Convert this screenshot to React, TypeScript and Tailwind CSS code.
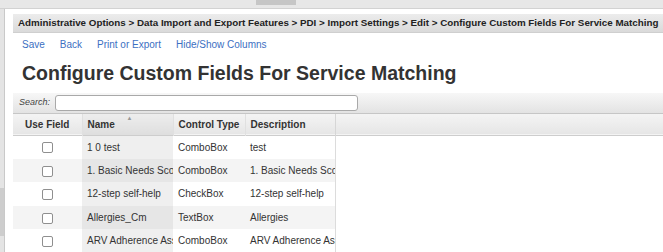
import React from 'react';

interface Field {
  name: string;
  control: string;
  description: string;
}

const fields: Field[] = [
  { name: '1 0 test', control: 'ComboBox', description: 'test' },
  { name: '1. Basic Needs Score', control: 'ComboBox', description: '1. Basic Needs Score' },
  { name: '12-step self-help', control: 'CheckBox', description: '12-step self-help' },
  { name: 'Allergies_Cm', control: 'TextBox', description: 'Allergies' },
  { name: 'ARV Adherence Assessment', control: 'ComboBox', description: 'ARV Adherence Assessment' },
];

const links = ['Save', 'Back', 'Print or Export', 'Hide/Show Columns'];

export default function App() {
  return (
    <div
      className="w-[663px] h-[252px] overflow-hidden bg-white flex flex-col text-[#333]"
      style={{ fontFamily: '"Liberation Sans", Arial, sans-serif' }}
    >
      {/* window top strip */}
      <div className="h-[9px] shrink-0 bg-[#e7e7e7] border-b border-[#d2d2d2] pl-[256px]">
        <div className="w-[40px] h-[5px] bg-[#c6c6c6]" />
      </div>

      <div className="flex flex-1 min-h-0">
        <div className="w-[5px] shrink-0 bg-[#e4e4e4] border-r border-[#c9c9c9] flex flex-col">
          <div className="flex-1" />
          <div className="h-[48px] mb-[16px] bg-[#cdcdcd]" />
        </div>

        <div className="flex-1 min-w-0 pl-[8px] pt-[5px]">
          {/* breadcrumb */}
          <div className="h-[19px] bg-gradient-to-b from-[#ececec] to-[#dadada] border-b border-[#cfcfcf] flex items-center pl-[5px] whitespace-nowrap overflow-hidden">
            <span className="text-[9.8px] font-bold text-[#222]">
              Administrative Options &gt; Data Import and Export Features &gt; PDI &gt; Import Settings &gt; Edit &gt; Configure Custom Fields For Service Matching
            </span>
          </div>

          {/* action links */}
          <div className="h-[22px] flex items-center gap-[15px] pl-[9px] text-[10px] text-[#3c6fc2]">
            {links.map((l) => (
              <span key={l}>{l}</span>
            ))}
          </div>

          {/* title */}
          <h1 className="h-[38px] flex items-center pl-[9px] text-[19.5px] font-bold text-[#333] whitespace-nowrap">
            Configure Custom Fields For Service Matching
          </h1>

          {/* search */}
          <div className="h-[21px] bg-gradient-to-b from-[#f7f7f7] to-[#e3e3e3] border-b border-[#c6c6c6] flex items-center pl-[6px] gap-[5px]">
            <span className="text-[9px] italic text-[#444]">Search:</span>
            <div className="w-[303px] h-[16px] bg-white border border-[#a9a9a9] rounded-[3px]" />
          </div>

          {/* table */}
          <table className="table-fixed border-collapse w-full text-[10px]">
            <colgroup>
              <col className="w-[69px]" />
              <col className="w-[91px]" />
              <col className="w-[72px]" />
              <col className="w-[90px]" />
              <col />
            </colgroup>
            <thead>
              <tr className="h-[21px] bg-gradient-to-b from-[#f4f4f4] to-[#e6e6e6] border-b border-[#cdcdcd]">
                <th className="font-bold text-center text-[#333] whitespace-nowrap">Use Field</th>
                <th className="relative font-bold text-left pl-[5px] text-[#333] bg-gradient-to-b from-[#ededed] to-[#dedede] border-l border-[#e0e0e0]">
                  Name
                  <span className="absolute left-[44px] top-[1px] text-[6px] leading-none text-[#999]">▲</span>
                </th>
                <th className="font-bold text-left pl-[5px] text-[#333] border-l border-[#e0e0e0] whitespace-nowrap">Control Type</th>
                <th className="font-bold text-left pl-[5px] text-[#333] border-l border-[#e0e0e0] whitespace-nowrap">Description</th>
                <th className="border-l border-[#d6d6d6]" />
              </tr>
            </thead>
            <tbody>
              {fields.map((f, i) => {
                const odd = i % 2 === 1;
                return (
                  <tr key={f.name} className={`h-[23.5px] ${odd ? 'bg-[#f4f4f4]' : 'bg-white'}`}>
                    <td className="text-center">
                      <span className="inline-block align-middle w-[11px] h-[11px] border border-[#8f8f8f] rounded-[2px] bg-white" />
                    </td>
                    <td
                      className={`pl-[5px] whitespace-nowrap overflow-hidden text-[#333] ${
                        odd ? 'bg-[#e6e6e6]' : 'bg-[#efefef]'
                      }`}
                    >
                      {f.name}
                    </td>
                    <td className="pl-[5px] whitespace-nowrap overflow-hidden text-[#333]">{f.control}</td>
                    <td className="pl-[5px] whitespace-nowrap overflow-hidden text-[#333]">{f.description}</td>
                    <td className="bg-white border-l border-[#dcdcdc]" />
                  </tr>
                );
              })}
            </tbody>
          </table>
        </div>
      </div>
    </div>
  );
}
